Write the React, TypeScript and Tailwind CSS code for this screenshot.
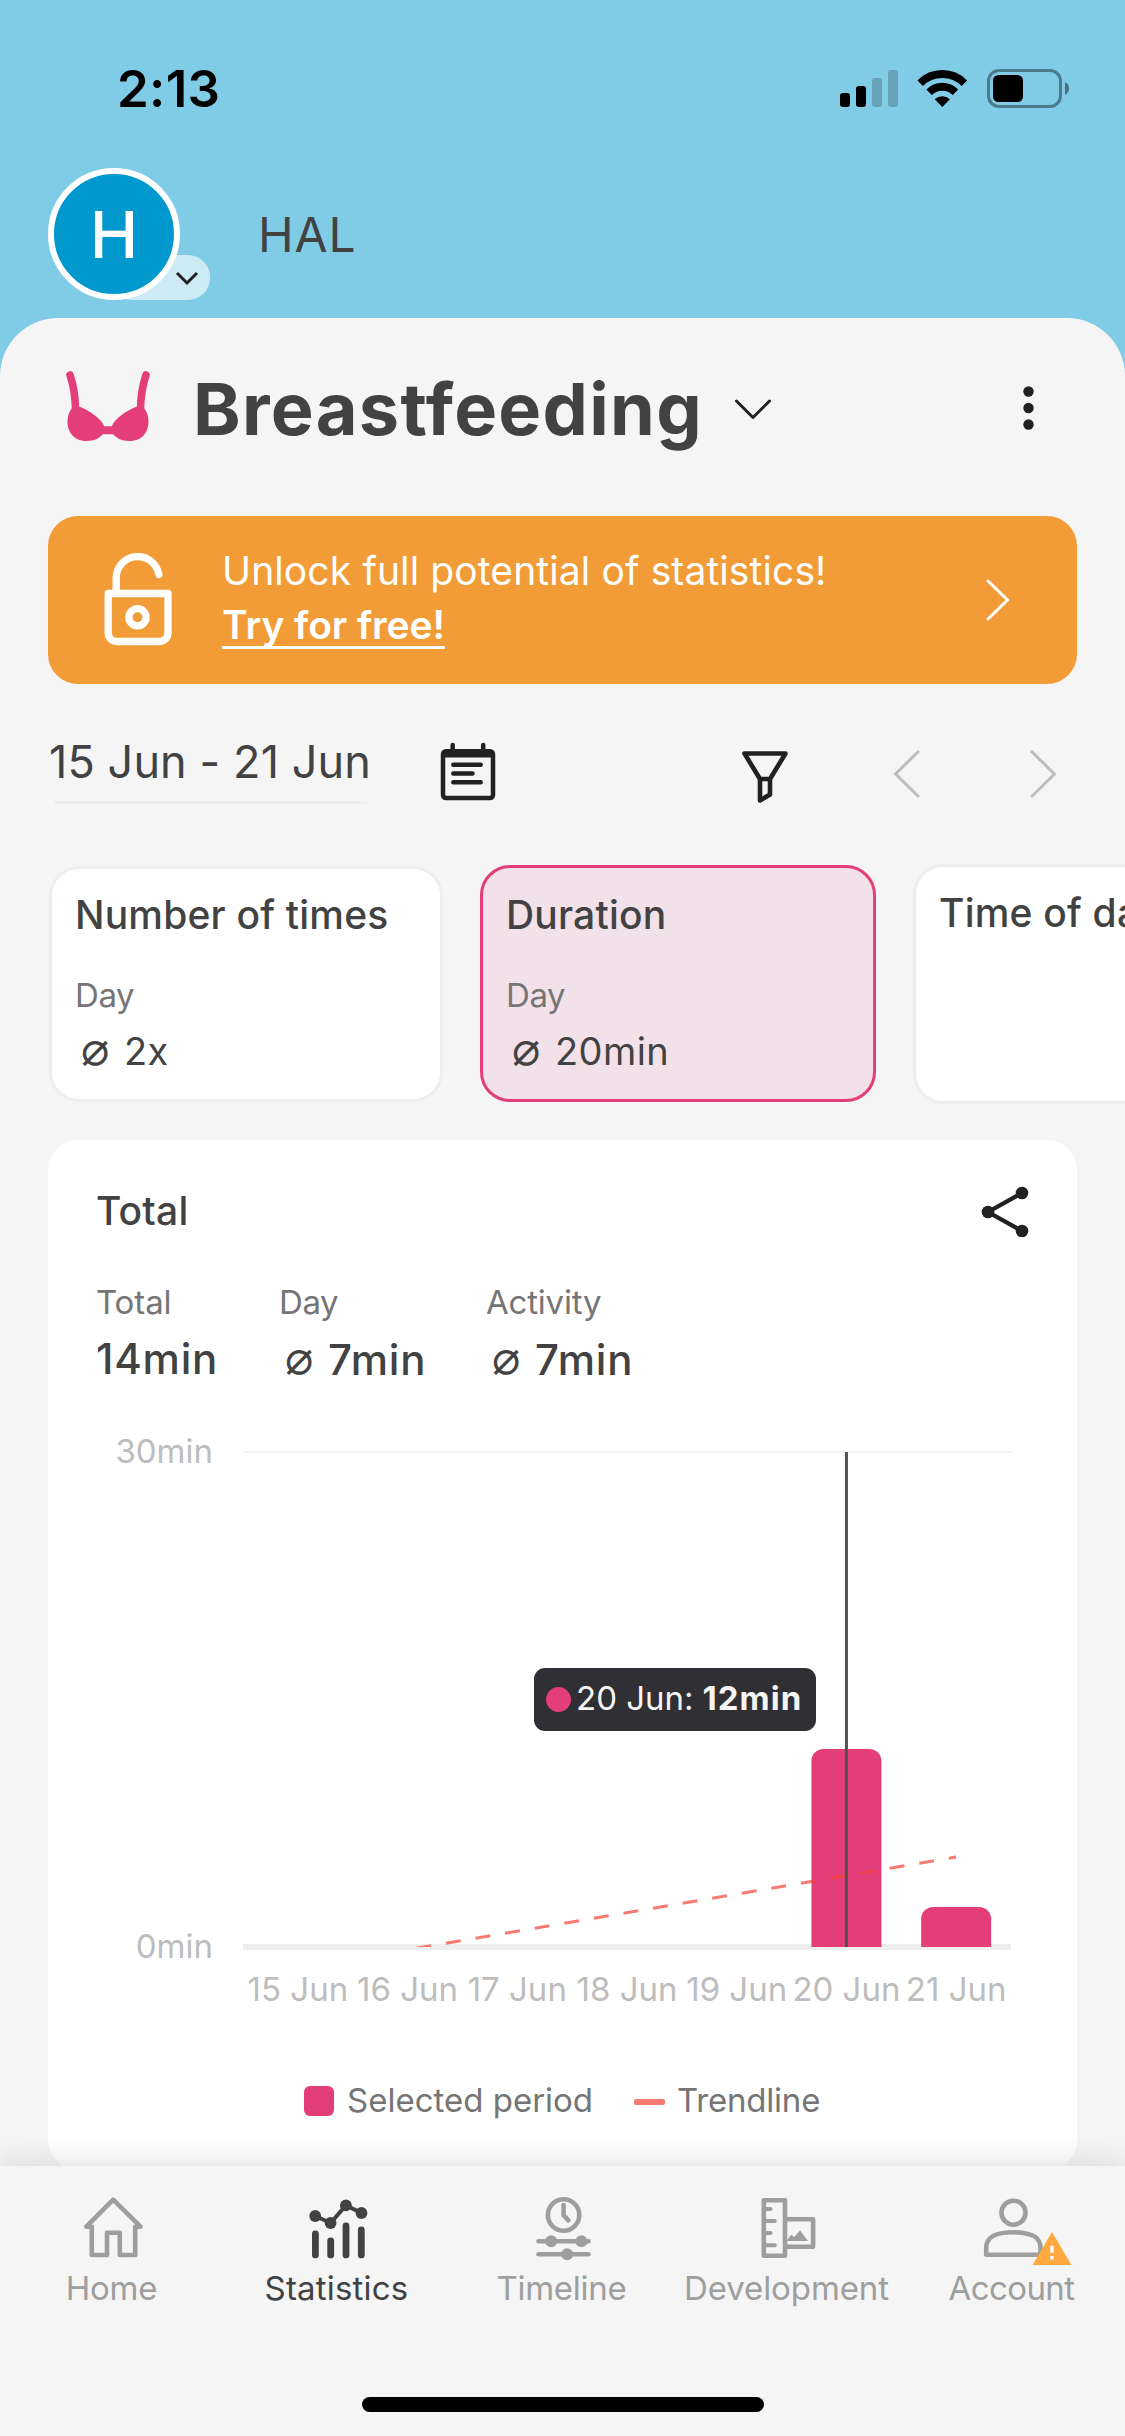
import { useState } from 'react'
import type { ReactNode } from 'react'
import clsx from 'clsx'

interface DayValue {
  label: string
  minutes: number
}

interface Metric {
  id: string
  title: string
  value?: string
}

const days: DayValue[] = [
  { label: '15 Jun', minutes: 0 },
  { label: '16 Jun', minutes: 0 },
  { label: '17 Jun', minutes: 0 },
  { label: '18 Jun', minutes: 0 },
  { label: '19 Jun', minutes: 0 },
  { label: '20 Jun', minutes: 12 },
  { label: '21 Jun', minutes: 2.42 },
]

const metrics: Metric[] = [
  { id: 'count', title: 'Number of times', value: '2x' },
  { id: 'duration', title: 'Duration', value: '20min' },
  { id: 'time', title: 'Time of day' },
]

function StatusBar() {
  return (
    <div className="h-[168px] shrink-0 flex items-center justify-between pt-[10px] pl-[117px] pr-[56px] text-black">
      <span className="pb-px text-[51px] font-semibold leading-none tracking-[0.3px]">2:13</span>
      <svg width="229" height="40" viewBox="0 0 229 40">
        <rect x="0" y="24" width="10" height="14" rx="3" />
        <rect x="16" y="17" width="10" height="21" rx="3" />
        <rect x="32" y="9" width="10" height="29" rx="3" opacity="0.2" />
        <rect x="48" y="1" width="10" height="37" rx="3" opacity="0.2" />
        <g fill="none" stroke="#000" strokeWidth="7.8">
          <path d="M80.2 14.2a31.2 31.2 0 0 1 44.2 0" />
          <path d="M89.1 23.2a18.7 18.7 0 0 1 26.4 0" />
        </g>
        <path d="M102.3 38l-7.6-7.7a11 11 0 0 1 15.2 0z" />
        <rect x="148.5" y="1.5" width="72" height="36" rx="10.5" fill="none" stroke="#000" strokeWidth="3" opacity="0.4" />
        <rect x="153" y="6" width="30" height="27" rx="5.5" />
        <path d="M225 13.3c5.3 1.6 5.3 10.8 0 12.4z" opacity="0.45" />
      </svg>
    </div>
  )
}

function ProfileRow() {
  return (
    <div className="h-[132px] mb-[18px] shrink-0 flex items-center pl-12">
      <div className="relative w-[132px] h-[132px]">
        <div className="absolute left-[62px] bottom-0 w-[100px] h-[45px] rounded-[22px] bg-[#cdebf5]" />
        <div className="relative w-[132px] h-[132px] rounded-full border-[6.5px] border-white bg-[#0199cd] flex items-center justify-center text-white text-[65px] font-medium leading-none">
          H
        </div>
        <svg className="absolute left-[126px] top-[102px]" width="26" height="16" fill="none" stroke="#212121" strokeWidth="3">
          <path d="M3 3l10 10L23 3" />
        </svg>
      </div>
      <span className="ml-[78px] pt-px text-[48px] leading-none tracking-[0.8px] text-[#424242]">HAL</span>
    </div>
  )
}

function TitleRow() {
  return (
    <div className="h-[181px] flex items-center pl-[66px] pr-[91px]">
      <svg width="84" height="75" viewBox="0 0 84 75" fill="#e33e7a">
        <path
          d="M4 4C7.4 14 9.3 26 9.6 39M80 4C76.6 14 74.7 26 74.4 39"
          fill="none"
          stroke="#e33e7a"
          strokeWidth="7.6"
          strokeLinecap="round"
        />
        <path d="M6 37L14 35.8C24 40 35 47.5 38.3 55.3H45.7C49 47.5 60 40 70 35.8L78 37C83 43 84 53 80.5 60C76.5 68 70 70 63 70C56 70 50.5 67.5 47.3 63.3H36.7C33.5 67.5 28 70 21 70C14 70 7.5 68 3.5 60C0 53 1 43 6 37Z" />
      </svg>
      <h1 className="ml-[43px] w-[542px] text-[72px] font-bold leading-none tracking-[1.3px] text-[#424242]">
        Breastfeeding
      </h1>
      <svg width="36" height="20" fill="none" stroke="#212121" strokeWidth="3" strokeLinejoin="round" strokeLinecap="round">
        <path d="M1.5 2l16.5 16.5L34.5 2" />
      </svg>
      <svg className="ml-auto mb-[2px]" width="11" height="44" fill="#212121">
        <circle cx="5.5" cy="5.5" r="5.2" />
        <circle cx="5.5" cy="22" r="5.2" />
        <circle cx="5.5" cy="38.5" r="5.2" />
      </svg>
    </div>
  )
}

function PremiumBanner() {
  return (
    <div className="mt-[17px] mx-12 h-[168px] rounded-[30px] bg-[#f29c37] text-white flex items-center pl-14 pr-[67px]">
      <svg width="68" height="94" viewBox="0 0 68 94" fill="none" stroke="#fff" strokeWidth="7.3">
        <path d="M12.2 40V25.3a21.5 21.5 0 0 1 42.7-3.8" strokeLinecap="round" />
        <path d="M4.2 40.5H64V80a8.5 8.5 0 0 1-8.5 8.5H12.700A8.5 8.5 0 0 1 4.2 80z" strokeLinejoin="round" />
        <circle cx="33.5" cy="64.3" r="8.6" />
      </svg>
      <div className="ml-[50px] pb-1 text-[39px] leading-[54px]">
        <div className="tracking-[0.12px]">Unlock full potential of statistics!</div>
        <a className="font-semibold tracking-[-0.1px] underline decoration-[3px] underline-offset-[7px] [text-decoration-skip-ink:none]">
          Try for free!
        </a>
      </div>
      <svg className="ml-auto" width="24" height="42" fill="none" stroke="#fff" strokeWidth="3" strokeLinecap="round" strokeLinejoin="round">
        <path d="M2 2l19.5 19L2 40" />
      </svg>
    </div>
  )
}

function PeriodToolbar() {
  return (
    <div className="h-[180px] flex items-start pl-[54px] text-[#212121]">
      <div className="mt-10 w-[313px] h-20 border-b-[3px] border-[#eeeeee] text-[45px] leading-[75px] tracking-[0.1px] text-[#424242] whitespace-nowrap">
        <span className="-ml-[5px]">15 Jun - 21 Jun</span>
      </div>
      <svg className="ml-[73px] mt-[58px]" width="56" height="60" fill="none" stroke="currentColor" strokeWidth="4.5" strokeLinecap="round">
        <rect x="3" y="9.3" width="50" height="46.7" rx="3" />
        <path d="M3 12.5h50" strokeWidth="6" strokeLinecap="butt" />
        <path d="M12.7 3v8M43.2 3v8M13.3 22.7h27.4M13.3 31.5h19.2M13.3 40.2h27.4" />
      </svg>
      <svg className="ml-[245px] mt-[66px]" width="48" height="54" fill="none" stroke="currentColor" strokeWidth="4.6" strokeLinejoin="round">
        <path d="M3.5 3.5h41L29 29H19zM19 29v21.5l10-6V29" />
      </svg>
      <svg className="ml-[104px] mt-[66px]" width="27" height="48" fill="none" stroke="#bdbdbd" strokeWidth="3">
        <path d="M26 1L2.5 24L26 47" />
      </svg>
      <svg className="ml-[110px] mt-[66px]" width="27" height="48" fill="none" stroke="#bdbdbd" strokeWidth="3">
        <path d="M1 1l23.5 23L1 47" />
      </svg>
    </div>
  )
}

function Average({ children }: { children: ReactNode }) {
  return (
    <span className="flex items-center">
      <span className="w-[49px] pl-[6px] pb-[3px] text-[47px] leading-[48px] font-normal tracking-normal font-['DejaVu_Sans',sans-serif]">⌀</span>
      {children}
    </span>
  )
}

interface MetricCardProps {
  metric: Metric
  selected: boolean
  onSelect: (id: string) => void
}

function MetricCard({ metric, selected, onSelect }: MetricCardProps) {
  return (
    <button
      type="button"
      onClick={() => onSelect(metric.id)}
      className={clsx(
        'shrink-0 flex flex-col items-start rounded-[30px] border-[3px] text-left text-[#424242]',
        selected
          ? 'mt-px w-[396px] h-[237px] pt-[22px] pl-[23px] border-[#e33e7a] bg-[#f3e1e9]'
          : 'w-[394px] pl-[23px] border-[#eeeeee] bg-white',
        !selected && (metric.value ? 'mt-[2px] h-[236px] pt-[21px]' : 'h-[240px] pt-[21px]'),
      )}
    >
      <span className="text-[39px] font-medium leading-[50px] tracking-[0.2px] whitespace-nowrap">{metric.title}</span>
      {metric.value && (
        <>
          <span className="mt-[35px] text-[33px] leading-[40px] tracking-[-0.4px] text-[#757575]">Day</span>
          <span className="mt-[10px] text-[38px] leading-[50px] tracking-[0.4px]">
            <Average>{metric.value}</Average>
          </span>
        </>
      )}
    </button>
  )
}

const PLOT = { left: 195, right: 963, top: 67, bottom: 562, max: 30 }
const BAR_WIDTH = 70

function DurationChart({ active }: { active: number }) {
  const step = (PLOT.right - PLOT.left) / days.length
  const centre = (i: number) => PLOT.left + step * (i + 0.5)
  const scale = (PLOT.bottom - PLOT.top) / PLOT.max

  return (
    <div className="relative h-[640px]">
      <svg width="1029" height="640" className="block text-[33px]" fill="#bdbdbd">
        <defs>
          <clipPath id="plot">
            <rect x={PLOT.left} y={PLOT.top} width={PLOT.right - PLOT.left} height={PLOT.bottom - PLOT.top} />
          </clipPath>
        </defs>
        <rect x={PLOT.left} y={PLOT.top - 1} width={PLOT.right - PLOT.left} height="2" fill="#f3f3f3" />
        <rect x={PLOT.left} y={PLOT.bottom - 3} width={PLOT.right - PLOT.left} height="6" fill="#eeeeee" />
        <text x="165" y="78" textAnchor="end">30min</text>
        <text x="165" y="573" textAnchor="end">0min</text>

        <g clipPath="url(#plot)">
          {days.map((d, i) =>
            d.minutes > 0 ? (
              <rect
                key={d.label}
                x={centre(i) - BAR_WIDTH / 2}
                y={PLOT.bottom - d.minutes * scale}
                width={BAR_WIDTH}
                height={d.minutes * scale + 20}
                rx="12"
                fill="#e33e7a"
              />
            ) : null,
          )}
          {/* Trendline */}
          <path d="M368.4 563.2L908 472" stroke="#f44336" strokeOpacity="0.7" strokeWidth="3" strokeDasharray="15 15" />
          <rect x={centre(active) - 1.5} y={PLOT.top} width="3" height={PLOT.bottom - PLOT.top} fill="#505050" />
        </g>

        {days.map((d, i) => (
          <text key={d.label} x={centre(i)} y="616" textAnchor="middle">
            {d.label}
          </text>
        ))}
      </svg>

      {/* Tooltip */}
      <div className="absolute left-[486px] top-[283px] w-[282px] h-[63px] pb-px pl-3 rounded-[11px] bg-[#302f33] flex items-center text-[33px] text-[#f5f5f5] whitespace-nowrap">
        <span className="mt-px w-[25px] h-[25px] rounded-full bg-[#e33e7a]" />
        <span className="ml-[5px]">{days[active].label}:</span>
        <b className="ml-[9px] tracking-[1px]">{days[active].minutes}min</b>
      </div>
    </div>
  )
}

function TotalCard() {
  return (
    <section className="mt-9 mx-12 h-[1030px] rounded-[30px] bg-white text-[#424242]">
      <div className="h-[142px] flex items-center justify-between pl-[48px] pr-[47px]">
        <h2 className="pb-[2px] text-[39px] font-medium leading-none tracking-[0.2px]">Total</h2>
        <svg width="50" height="52" fill="#212121" stroke="#212121">
          <path d="M42 8L8 27l34 19" fill="none" strokeWidth="4.2" />
          <circle cx="8" cy="27" r="6.3" stroke="none" />
          <circle cx="42" cy="8" r="6.3" stroke="none" />
          <circle cx="42" cy="46" r="6.3" stroke="none" />
        </svg>
      </div>
      <dl className="flex pl-[48px] text-[42px] font-medium leading-[50px] tracking-[0.8px]">
        <div className="w-[183px]">
          <dt className="mb-3 text-[33px] font-normal leading-[40px] tracking-[-0.1px] text-[#757575]">Total</dt>
          <dd className="pb-px">14min</dd>
        </div>
        <div className="w-[207px]">
          <dt className="mb-3 text-[33px] font-normal leading-[40px] tracking-[-0.4px] text-[#757575]">Day</dt>
          <dd><Average>7min</Average></dd>
        </div>
        <div>
          <dt className="mb-3 text-[33px] font-normal leading-[40px] tracking-[-0.2px] text-[#757575]">Activity</dt>
          <dd><Average>7min</Average></dd>
        </div>
      </dl>
      <DurationChart active={5} />
      <div className="h-[145px] pt-[6px] pl-[256px] flex items-center text-[33px] text-[#757575]">
        <span className="w-[30px] h-[30px] mt-px rounded-[6px] bg-[#e33e7a]" />
        <span className="ml-[13px] w-[287px]">Selected period</span>
        <span className="w-[31px] h-[6px] mt-[2px] rounded-[2px] bg-[#f77b72]" />
        <span className="ml-[12px] tracking-[-0.2px]">Trendline</span>
      </div>
    </section>
  )
}

const tabs: { id: string; label: string; tracking: string; icon: ReactNode }[] = [
  {
    id: 'home',
    label: 'Home',
    tracking: 'tracking-[-0.2px]',
    icon: <path d="M9.3 36.7L36.2 9.7L63.5 36.7H58.2V65H42.8V42.7H30V65H14.8V36.7Z" />,
  },
  {
    id: 'statistics',
    label: 'Statistics',
    tracking: 'tracking-[0.2px]',
    icon: (
      <>
        <path d="M13.2 26L28.6 33L43.9 15.4L59.5 23" strokeWidth="4" />
        <g fill="currentColor" stroke="none">
          <circle cx="13.2" cy="26" r="5.9" />
          <circle cx="28.6" cy="33" r="5.9" />
          <circle cx="43.9" cy="15.4" r="5.9" />
          <circle cx="59.5" cy="23" r="5.9" />
        </g>
        <path d="M13.4 44v20.9M28.7 51v13.9M44 36v28.9M59.3 40v24.9" strokeWidth="6.8" />
      </>
    ),
  },
  {
    id: 'timeline',
    label: 'Timeline',
    tracking: 'tracking-[-0.25px]',
    icon: (
      <>
        <circle cx="36.6" cy="25" r="15.7" />
        <path d="M36.6 15v10.2l4.8 5.2M11.5 51.3h50M11.5 64.3h50" />
        <g fill="currentColor" stroke="none">
          <circle cx="24.2" cy="51.3" r="6" />
          <circle cx="54.4" cy="51.3" r="6" />
          <circle cx="40.2" cy="64.3" r="6" />
        </g>
      </>
    ),
  },
  {
    id: 'development',
    label: 'Development',
    tracking: 'tracking-[-0.1px]',
    icon: (
      <>
        <path d="M11.8 10.2H33V65.7H11.8ZM33 29.2H61.1V56.8H33" />
        <path d="M13 19h5.5M13 31h9.8M13 43h5.5M13 55.2h9.8" strokeWidth="4" />
        <path d="M34.5 51L39.2 44.7L42.3 47L48.1 40.5L56 51Z" fill="currentColor" stroke="none" />
      </>
    ),
  },
  {
    id: 'account',
    label: 'Account',
    tracking: 'tracking-[-0.6px]',
    icon: (
      <>
        <circle cx="36.5" cy="22.7" r="12" />
        <path d="M9.2 64.7V58C9.2 46.5 19 42.3 36.5 42.3S63.5 46.5 63.5 58V64.7Z" />
        {/* Warning badge */}
        <path d="M75 42L94.5 75H55.5Z" fill="#ffa940" stroke="none" />
        <path d="M75 55.7v7M75 66v3.6" stroke="#fff" strokeWidth="3.4" strokeLinecap="butt" />
      </>
    ),
  },
]

function TabBar() {
  return (
    <nav className="relative z-10 h-[270px] shrink-0 pt-6 bg-[#f5f5f5] shadow-[0_0_34px_rgba(0,0,0,0.15)]">
      <div className="grid grid-cols-5">
        {tabs.map((tab) => (
          <div
            key={tab.id}
            className={clsx('flex flex-col items-center', tab.id === 'statistics' ? 'text-[#424242]' : 'text-[#9e9e9e]')}
          >
            <svg
              className="overflow-visible"
              width="72"
              height="78"
              viewBox="0 0 72 78"
              fill="none"
              stroke="currentColor"
              strokeWidth="4.6"
              strokeLinecap="round"
              strokeLinejoin="round"
            >
              {tab.icon}
            </svg>
            <span className={clsx('pr-[2px] text-[33px] leading-[41px]', tab.tracking)}>{tab.label}</span>
          </div>
        ))}
      </div>
      <div className="mt-[88px] mx-auto w-[402px] h-[15px] rounded-full bg-black" />
    </nav>
  )
}

export default function App() {
  const [selected, setSelected] = useState('duration')

  return (
    <div className="w-[1125px] h-[2436px] overflow-hidden flex flex-col bg-[#80cce6] font-['Inter','Liberation_Sans',sans-serif]">
      <StatusBar />
      <ProfileRow />
      <main className="flex-1 min-h-0 overflow-hidden rounded-t-[58px] bg-[#f5f5f5]">
        <TitleRow />
        <PremiumBanner />
        <PeriodToolbar />
        {/* Horizontally scrolled, the last card runs off the screen */}
        <div className="h-[240px] pl-[49px] flex items-start gap-[37px] overflow-hidden">
          {metrics.map((m) => (
            <MetricCard key={m.id} metric={m} selected={m.id === selected} onSelect={setSelected} />
          ))}
        </div>
        <TotalCard />
      </main>
      <TabBar />
    </div>
  )
}
